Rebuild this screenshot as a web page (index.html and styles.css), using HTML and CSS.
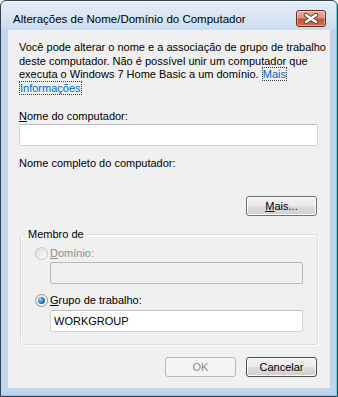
FILE: index.html
```html
<!DOCTYPE html>
<html lang="pt-BR">
<head>
  <meta charset="UTF-8">
  <link rel="stylesheet" href="styles.css">
</head>
<body>

<div class="window">
  <div class="titlebar">
    <span class="title">Alterações de Nome/Domínio do Computador</span>
    <button class="close" title="Fechar">
      <svg width="16" height="11" viewBox="0 0 16 11">
        <path d="M3 2 L13 9 M13 2 L3 9" stroke="#5b3b36" stroke-width="4.4" stroke-linecap="round"/>
        <path d="M3 2 L13 9 M13 2 L3 9" stroke="#ffffff" stroke-width="2.6" stroke-linecap="round"/>
      </svg>
    </button>
  </div>

  <div class="content">
    <p class="intro">Você pode alterar o nome e a associação de grupo de trabalho<br>deste computador. Não é possível unir um computador que<br>executa o Windows 7 Home Basic a um domínio. <a class="link" href="#">Mais<br>Informações</a></p>

    <div class="label"><u>N</u>ome do computador:</div>
    <div class="textbox"></div>

    <div class="label label-full">Nome completo do computador:</div>
    <div class="full-name"></div>

    <div class="more-row">
      <button class="btn"><u>M</u>ais...</button>
    </div>

    <!-- Membro de -->
    <fieldset class="group">
      <legend>Membro de</legend>
      <div class="group-body">
        <div class="radio-row disabled">
          <span class="radio"></span>
          <span><u>D</u>omínio:</span>
        </div>
        <div class="textbox indent disabled"></div>

        <div class="radio-row second">
          <span class="radio checked"><span class="dot"></span></span>
          <span><u>G</u>rupo de trabalho:</span>
        </div>
        <div class="textbox indent workgroup">WORKGROUP</div>
      </div>
    </fieldset>

    <div class="footer">
      <button class="btn" disabled>OK</button>
      <button class="btn btn-default">Cancelar</button>
    </div>
  </div>
</div>

</body>
</html>
```

FILE: styles.css
```css
* {
  box-sizing: border-box;
}
body {
  margin: 0;
  font-family: "Liberation Sans", Arial, sans-serif;
  font-size: 11px;
  color: #000;
  background: #fff;
}
.window {
  width: 338px;
  height: 397px;
  border: 1px solid #34414f;
  border-radius: 6px 6px 0 0;
  padding: 0 7px 8px 7px;
  display: flex;
  flex-direction: column;
  background: linear-gradient(#e4edf7 0, #d6e4f3 18px, #c8dbef 29px, #bfd5ec 29px);
  box-shadow: inset -1px -1px 0 #74cde3, inset 0 1px 0 #f6f9fd;
}
.titlebar {
  height: 29px;
  display: flex;
  justify-content: space-between;
  align-items: flex-start;
  padding: 9px 4px 0 5px;
}
.title {
  font-size: 11.5px;
  line-height: 14px;
  margin-top: 2px;
}
.close {
  width: 30px;
  height: 17px;
  padding: 0;
  border: 1px solid #6c2c23;
  border-radius: 3px;
  background: linear-gradient(#eab0a3 0, #dd8f7e 45%, #c9513b 55%, #d26f57 100%);
  box-shadow: inset 0 0 0 1px rgba(255,255,255,0.35);
  display: flex;
  align-items: center;
  justify-content: center;
}
.content {
  flex: 1;
  background: #f0f0f0;
  padding: 11px 12px 0 11px;
  display: flex;
  flex-direction: column;
}
.intro {
  margin: 0;
  line-height: 13.5px;
  white-space: nowrap;
}
.link {
  color: #0066cc;
  text-decoration: none;
  border: 1px dotted #3a3a3a;
  -webkit-box-decoration-break: clone;
  box-decoration-break: clone;
}
.label {
  line-height: 14px;
  margin-top: 14px;
}
.label-full {
  margin-top: 10px;
}
.textbox {
  height: 22px;
  margin-top: 1px;
  background: #fff;
  border: 1px solid #cfd4da;
  border-top-color: #bcc0c6;
  border-radius: 2px;
  padding: 0 3px;
  line-height: 20px;
}
.full-name {
  height: 26px;
}
.more-row {
  display: flex;
  justify-content: flex-end;
}
.btn {
  width: 71px;
  height: 20px;
  margin-right: 1px;
  padding: 0;
  font-family: inherit;
  font-size: 11px;
  color: #000;
  border: 1px solid #707070;
  border-radius: 3px;
  background: linear-gradient(#f2f2f2 0, #ebebeb 50%, #dddddd 50%, #cfcfcf 100%);
  box-shadow: inset 0 0 0 1px #fbfbfb;
}
.btn-default {
  border-color: #4e4e4e;
}
.btn:disabled {
  color: #8a8a8a;
  border-color: #b4b8bb;
  background: #f4f4f4;
  box-shadow: none;
}
.group {
  margin: 11px 0 0 1px;
  padding: 0;
  border: 1px solid #d5dfe5;
  border-radius: 3px;
  box-shadow: inset 1px 1px 0 #fff, 1px 1px 0 #fff;
}
.group legend {
  margin-left: 6px;
  padding: 0 1px;
  line-height: 14px;
}
.group-body {
  padding: 5px 14px 12px 14px;
}
.radio-row {
  display: flex;
  align-items: center;
  height: 14px;
  line-height: 14px;
}
.radio-row.disabled {
  color: #8d8d8d;
}
.radio-row.second {
  margin-top: 9px;
}
.radio {
  width: 13px;
  height: 13px;
  margin-right: 2px;
  border-radius: 50%;
  border: 1px solid #c4c6c8;
  background: linear-gradient(135deg, #dedede, #fafafa);
}
.radio.checked {
  border-color: #8c8f92;
  background: linear-gradient(135deg, #e8e8e8, #ffffff);
  display: flex;
  align-items: center;
  justify-content: center;
}
.dot {
  width: 7px;
  height: 7px;
  border-radius: 50%;
  background: radial-gradient(circle at 35% 35%, #a9e0ff 0, #2a7fcf 45%, #0b3f78 100%);
}
.indent {
  margin-left: 15px;
  margin-top: 2px;
}
.textbox.disabled {
  background: #f0f0f0;
  border-color: #b7b7b7;
}
.workgroup {
  margin-top: 3px;
}
.footer {
  margin-top: 12px;
  display: flex;
  justify-content: flex-end;
  gap: 9px;
}
```
